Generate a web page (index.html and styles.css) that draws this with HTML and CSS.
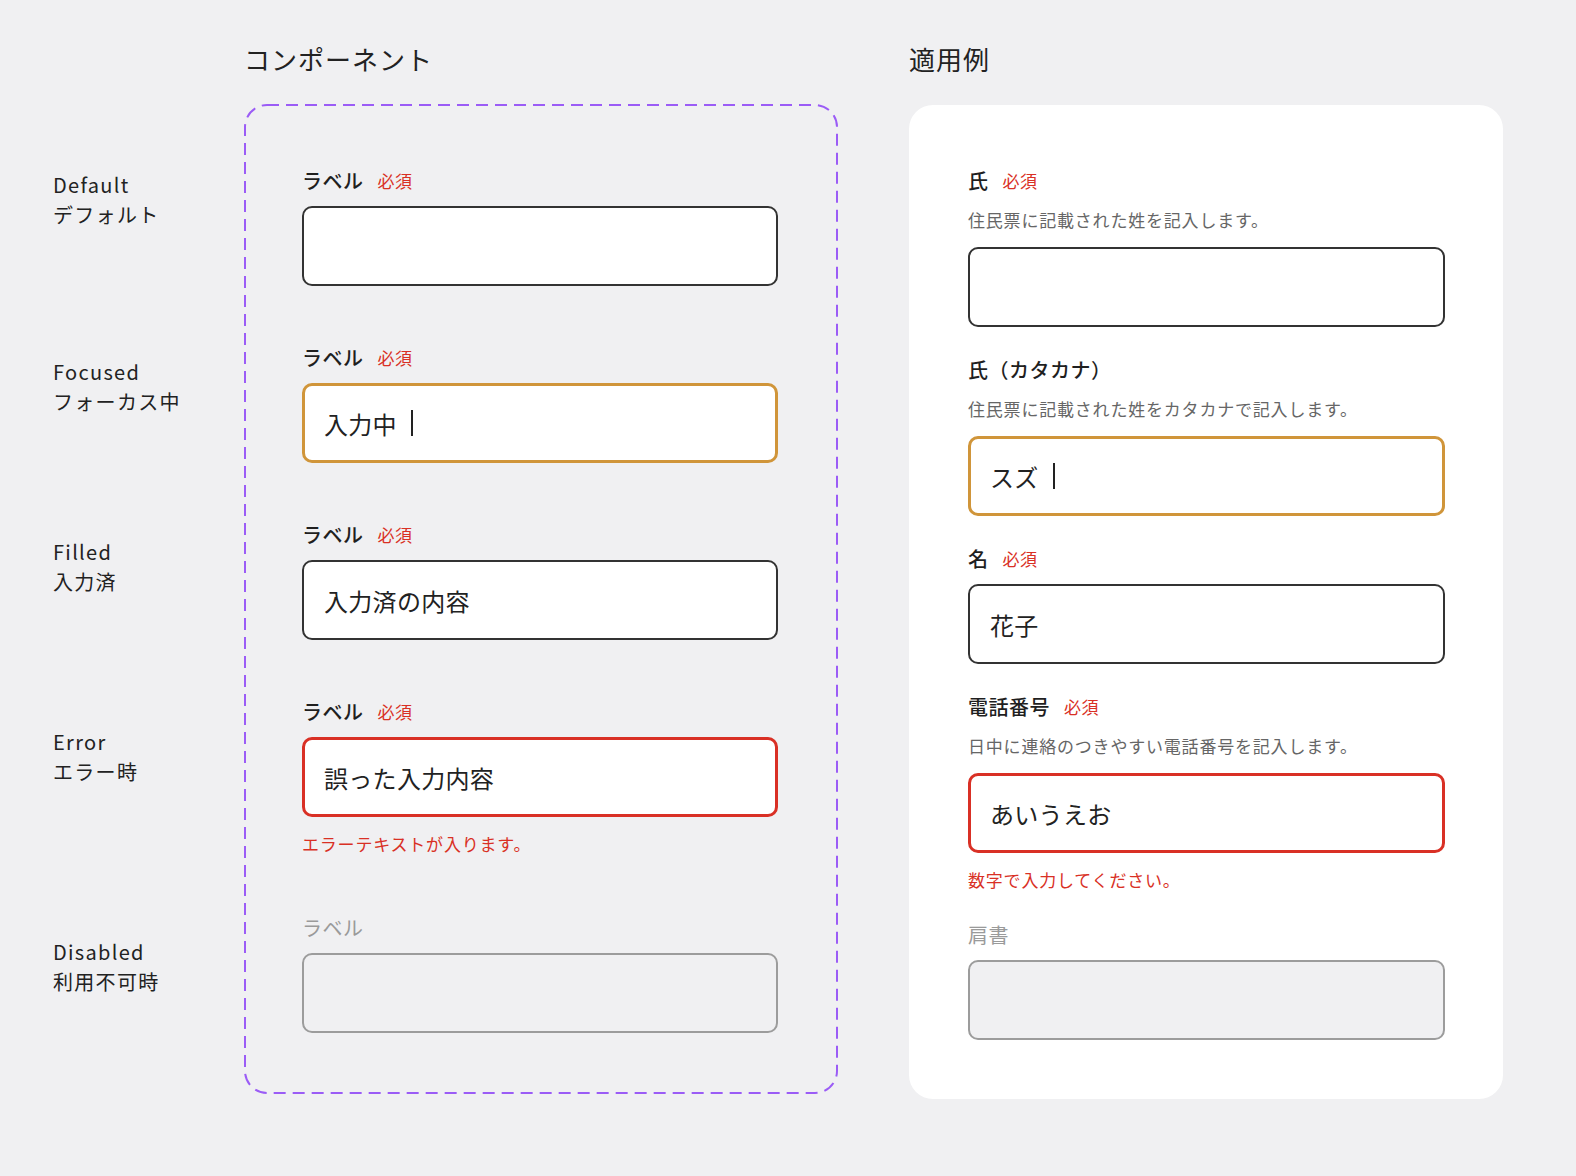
FILE: index.html
```html
<!DOCTYPE html>
<html lang="ja">
<head>
<meta charset="utf-8">
<title>Text Field</title>
<link rel="stylesheet" href="styles.css">
</head>
<body>
<div class="page">
  <div class="states">
    <div class="state state--default">Default<br>デフォルト</div>
    <div class="state state--focused">Focused<br>フォーカス中</div>
    <div class="state state--filled">Filled<br>入力済</div>
    <div class="state state--error">Error<br>エラー時</div>
    <div class="state state--disabled">Disabled<br>利用不可時</div>
  </div>

  <section class="col">
    <h2 class="col-title">コンポーネント</h2>
    <div class="spec">
      <div class="field">
        <div class="field-label">ラベル<span class="req">必須</span></div>
        <div class="input"></div>
      </div>
      <div class="field">
        <div class="field-label">ラベル<span class="req">必須</span></div>
        <div class="input input--focused">入力中<span class="caret"></span></div>
      </div>
      <div class="field">
        <div class="field-label">ラベル<span class="req">必須</span></div>
        <div class="input">入力済の内容</div>
      </div>
      <div class="field">
        <div class="field-label">ラベル<span class="req">必須</span></div>
        <div class="input input--error">誤った入力内容</div>
        <div class="error-text">エラーテキストが入ります。</div>
      </div>
      <div class="field">
        <div class="field-label field-label--disabled">ラベル</div>
        <div class="input input--disabled"></div>
      </div>
    </div>
  </section>

  <section class="col col--demo">
    <h2 class="col-title">適用例</h2>
    <div class="demo">
      <div class="field">
        <div class="field-label">氏<span class="req">必須</span></div>
        <div class="help">住民票に記載された姓を記入します。</div>
        <div class="input"></div>
      </div>
      <div class="field">
        <div class="field-label">氏（カタカナ）</div>
        <div class="help">住民票に記載された姓をカタカナで記入します。</div>
        <div class="input input--focused">スズ<span class="caret"></span></div>
      </div>
      <div class="field">
        <div class="field-label">名<span class="req">必須</span></div>
        <div class="input">花子</div>
      </div>
      <div class="field">
        <div class="field-label">電話番号<span class="req">必須</span></div>
        <div class="help">日中に連絡のつきやすい電話番号を記入します。</div>
        <div class="input input--error">あいうえお</div>
        <div class="error-text">数字で入力してください。</div>
      </div>
      <div class="field">
        <div class="field-label field-label--disabled">肩書</div>
        <div class="input input--disabled"></div>
      </div>
    </div>
  </section>
</div>
</body>
</html>
```

FILE: styles.css
```css
html, body {
  margin: 0;
  padding: 0;
}

body {
  background: #f0f0f2;
  color: #1f1f1f;
  font-family: "Noto Sans CJK JP", "Noto Sans", sans-serif;
}

.page {
  display: flex;
  align-items: flex-start;
  box-sizing: border-box;
  min-height: 1176px;
  padding: 41px 0 0 53px;
}

/* left state labels */
.states {
  flex: none;
  width: 191px;
  display: flex;
  flex-direction: column;
}

.state {
  font-size: 20px;
  line-height: 30px;
  letter-spacing: 1.3px;
  color: #222;
}

.state--default { margin-top: 129px; }
.state--focused { margin-top: 127px; }
.state--filled { margin-top: 120px; }
.state--error { margin-top: 130px; }
.state--disabled { margin-top: 150px; }

/* columns */
.col {
  flex: none;
  width: 594px;
  display: flex;
  flex-direction: column;
  gap: 27px;
}

.col--demo {
  margin-left: 71px;
}

.col-title {
  margin: 0;
  font-size: 26px;
  line-height: 36px;
  font-weight: 400;
  letter-spacing: 1px;
  color: #222;
}

/* component spec box with dashed purple outline */
.spec {
  box-sizing: border-box;
  height: 990px;
  padding: 63px 60px 60px 58px;
  display: flex;
  flex-direction: column;
  gap: 58px;
  background-image: url("data:image/svg+xml,%3Csvg xmlns='http://www.w3.org/2000/svg' width='594' height='990'%3E%3Crect x='1' y='1' width='592' height='988' rx='22' ry='22' fill='none' stroke='%239b5cf6' stroke-width='2' stroke-dasharray='12 7'/%3E%3C/svg%3E");
  background-repeat: no-repeat;
}

/* demo card */
.demo {
  box-sizing: border-box;
  height: 994px;
  margin-top: 1px;
  padding: 62px 58px 59px 59px;
  background: #fff;
  border-radius: 24px;
  display: flex;
  flex-direction: column;
  gap: 29px;
}

/* field */
.field {
  display: flex;
  flex-direction: column;
  gap: 11px;
}

.field-label {
  display: flex;
  align-items: center;
  gap: 14px;
  font-size: 20px;
  line-height: 28px;
  font-weight: 500;
  letter-spacing: 0.5px;
  color: #1f1f1f;
}

.field-label--disabled {
  color: #9a9a9a;
  font-weight: 400;
}

.req {
  font-size: 17px;
  font-weight: 400;
  letter-spacing: 0.5px;
  color: #d93025;
}

.help {
  margin: 2px 0 4px;
  font-size: 17px;
  line-height: 24px;
  letter-spacing: 0.8px;
  color: #666;
}

.input {
  box-sizing: border-box;
  height: 80px;
  padding: 0 20px;
  display: flex;
  align-items: center;
  border: 2px solid #333;
  border-radius: 10px;
  background: #fff;
  font-size: 24px;
  letter-spacing: 0.3px;
  color: #222;
}

.input--focused {
  border: 3px solid #d0953a;
  padding-left: 19px;
}

.input--error {
  border: 3px solid #d93025;
  padding-left: 19px;
}

.input--disabled {
  border-color: #9c9c9c;
  background: #f0f0f2;
}

.caret {
  display: inline-block;
  width: 2px;
  height: 26px;
  margin-left: 14px;
  background: #222;
}

.error-text {
  margin-top: 4px;
  font-size: 17px;
  line-height: 24px;
  letter-spacing: 0.8px;
  color: #d93025;
}
```
